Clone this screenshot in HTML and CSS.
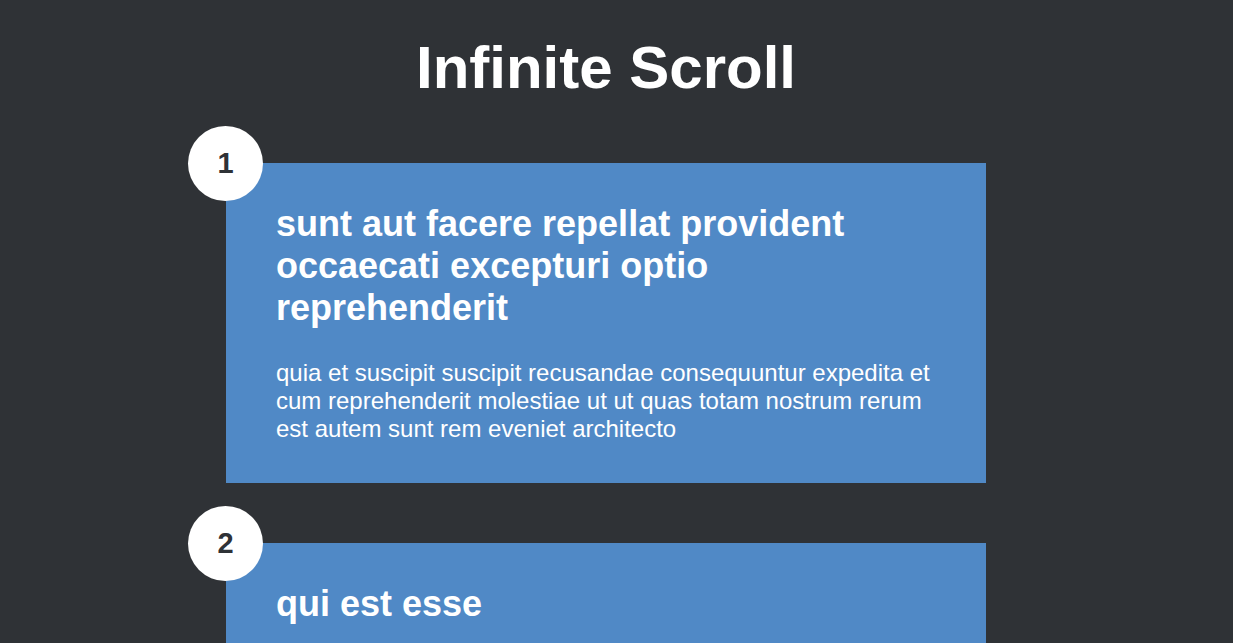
FILE: index.html
```html
<!DOCTYPE html>
<html lang="en">
<head>
<meta charset="utf-8">
<title>Infinite Scroll</title>
<link rel="stylesheet" href="styles.css">
</head>
<body>
<main class="page">
  <h1 class="title">Infinite Scroll</h1>
  <div class="posts">
    <article class="post">
      <div class="number">1</div>
      <h2 class="post-title">sunt aut facere repellat provident occaecati excepturi optio reprehenderit</h2>
      <p class="post-body">quia et suscipit suscipit recusandae consequuntur expedita et cum reprehenderit molestiae ut ut quas totam nostrum rerum est autem sunt rem eveniet architecto</p>
    </article>
    <article class="post">
      <div class="number">2</div>
      <h2 class="post-title">qui est esse</h2>
      <p class="post-body">est rerum tempore vitae sequi sint nihil reprehenderit dolor beatae ea dolores neque fugiat blanditiis voluptate porro vel nihil molestiae ut reiciendis qui aperiam non debitis possimus qui neque nisi nulla</p>
    </article>
  </div>
</main>
</body>
</html>
```

FILE: styles.css
```css
html, body {
  margin: 0;
  padding: 0;
}
body {
  background: #2f3236;
  color: #ffffff;
  font-family: "Liberation Sans", Arial, sans-serif;
  padding-right: 21px;
  overflow: hidden;
}
.page {
  width: 760px;
  margin: 0 auto;
}
.title {
  font-size: 60px;
  font-weight: bold;
  text-align: center;
  margin: 33px 0 61px;
  line-height: normal;
}
.posts {
  display: flex;
  flex-direction: column;
  gap: 60px;
}
.post {
  position: relative;
  background: #5089c6;
  padding: 40px 50px 40px;
}
.number {
  position: absolute;
  top: -37px;
  left: -38px;
  width: 75px;
  height: 75px;
  border-radius: 50%;
  background: #ffffff;
  color: #2f3236;
  font-size: 29px;
  font-weight: bold;
  display: flex;
  align-items: center;
  justify-content: center;
}
.post-title {
  font-size: 36px;
  font-weight: bold;
  margin: 0 0 30px;
  line-height: normal;
}
.post-body {
  font-size: 24px;
  margin: 0;
  line-height: normal;
}
```
